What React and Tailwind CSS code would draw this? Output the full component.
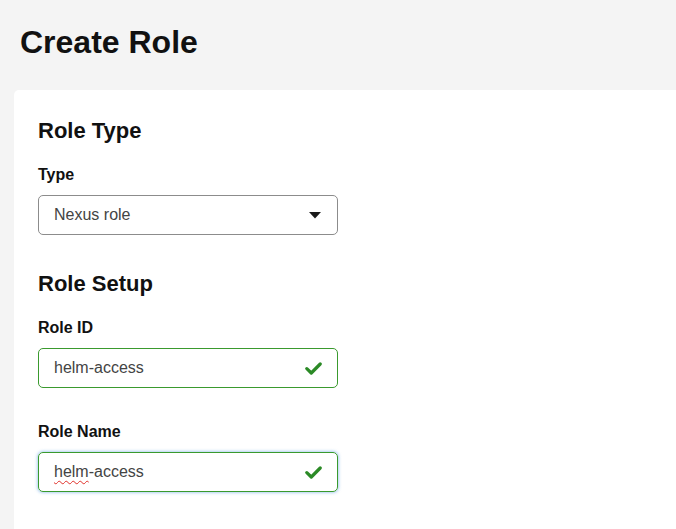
import React from "react";

function Check() {
  return (
    <svg width="17" height="13" viewBox="0 0 17 13" className="shrink-0">
      <path d="M1.8 6.6 L6.3 11 L15.2 2" fill="none" stroke="#2b8a26" strokeWidth="3.2" strokeLinecap="round" strokeLinejoin="round" />
    </svg>
  );
}

function Caret() {
  return (
    <svg width="12" height="7" viewBox="0 0 12 7" className="shrink-0">
      <path d="M0 0 H12 L6 6.5 Z" fill="#1a1a1a" />
    </svg>
  );
}

export default function App() {
  return (
    <div
      className="min-h-screen bg-[#f4f4f4] overflow-hidden flex flex-col"
      style={{ fontFamily: '"Liberation Sans", Arial, sans-serif' }}
    >
      <h1 className="pl-5 pt-[23px] text-[32px] leading-[38px] font-bold text-[#111] mb-[29px]">
        Create Role
      </h1>
      <div className="ml-[14px] flex-1 bg-white rounded-tl-[5px] pl-6 pt-[28px] pb-10">
        <h2 className="text-[22px] leading-[26px] font-bold text-[#111] mb-[21px]">Role Type</h2>
        <div className="text-[16px] leading-5 font-bold text-[#111] mb-[10px]">Type</div>
        <div className="w-[300px] h-10 border border-[#8c8c8c] rounded-[5px] flex items-center justify-between pl-[15px] pr-4 text-[16px] text-[#444]">
          <span>Nexus role</span>
          <Caret />
        </div>

        <h2 className="mt-[36px] text-[22px] leading-[26px] font-bold text-[#111] mb-[21px]">Role Setup</h2>
        <div className="text-[16px] leading-5 font-bold text-[#111] mb-[10px]">Role ID</div>
        <div className="w-[300px] h-10 border border-[#3a9a2e] rounded-[5px] flex items-center justify-between pl-[15px] pr-[15px] text-[16px] text-[#444]">
          <span>helm-access</span>
          <Check />
        </div>

        <div className="mt-[34px] text-[16px] leading-5 font-bold text-[#111] mb-[10px]">Role Name</div>
        <div className="w-[300px] h-10 border border-[#3a9a2e] rounded-[5px] flex items-center justify-between pl-[15px] pr-[15px] text-[16px] text-[#444] shadow-[0_0_3px_1px_rgba(110,170,230,0.55)]">
          <span>
            <span className="underline decoration-wavy decoration-[#e0302a] decoration-1 underline-offset-[3px]">helm</span>-access
          </span>
          <Check />
        </div>
      </div>
    </div>
  );
}
